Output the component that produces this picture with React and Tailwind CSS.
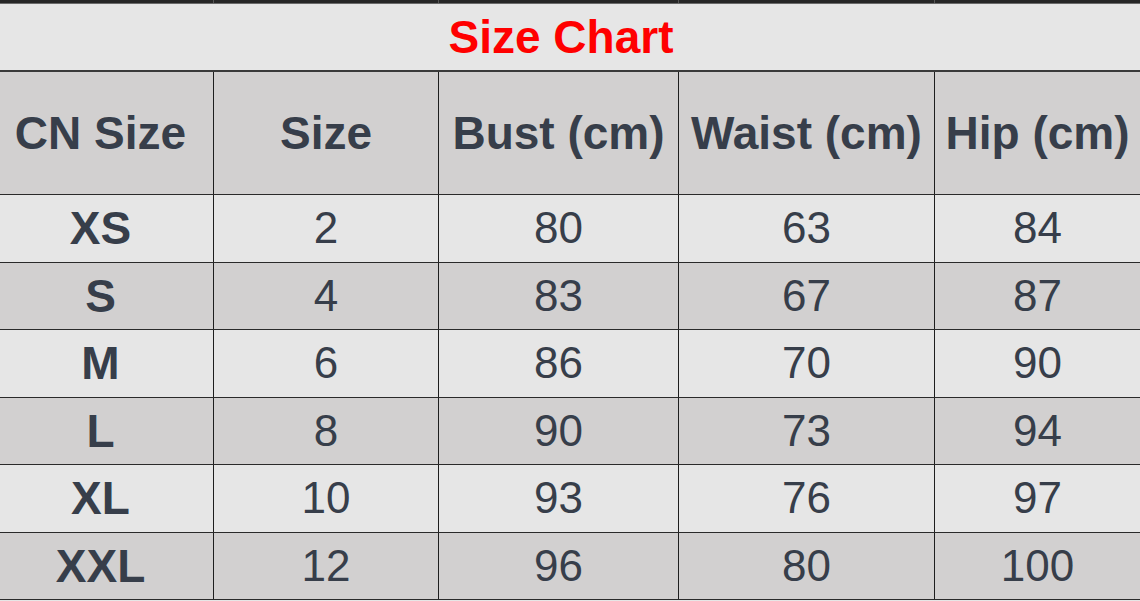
import React from "react";

const cols = ["w-[214px]", "w-[225px]", "w-[240px]", "w-[256px]", "flex-1"];
const headers = ["CN Size", "Size", "Bust (cm)", "Waist (cm)", "Hip (cm)"];
const rows = [
  ["XS", "2", "80", "63", "84"],
  ["S", "4", "83", "67", "87"],
  ["M", "6", "86", "70", "90"],
  ["L", "8", "90", "73", "94"],
  ["XL", "10", "93", "76", "97"],
  ["XXL", "12", "96", "80", "100"],
];

function Cell({ i, children, className = "" }) {
  return (
    <div
      className={`${cols[i]} ${
        i < 4 ? "border-r border-[#1e1e1e]" : ""
      } ${i === 0 ? "pr-[12px]" : ""} flex items-center justify-center ${className}`}
    >
      {children}
    </div>
  );
}

export default function App() {
  return (
    <div
      className="w-[1140px] h-[601px] bg-[#e6e6e6] flex flex-col overflow-hidden text-[#373e4a]"
      style={{ fontFamily: '"Liberation Sans", Arial, sans-serif' }}
    >
      <div className="h-[4px] flex bg-[#262626] border-b border-[#6a6a6a]">
        {cols.map((c, i) => (
          <div key={i} className={`${c} ${i < 4 ? "border-r border-[#555]" : ""}`} />
        ))}
      </div>
      <div className="h-[68px] flex items-center justify-center pr-[18px] border-b-2 border-[#3a3a3a] bg-[#e6e6e6]">
        <span className="text-[46px] font-bold text-[#ff0000] leading-none">Size Chart</span>
      </div>
      <div className="h-[123px] flex bg-[#d2d0d0] border-b border-[#2a2a2a]">
        {headers.map((h, i) => (
          <Cell key={h} i={i} className="text-[46px] font-bold leading-none">
            {h}
          </Cell>
        ))}
      </div>
      {rows.map((r, ri) => (
        <div
          key={ri}
          className={`h-[67.5px] flex border-b border-[#2a2a2a] ${
            ri % 2 === 0 ? "bg-[#e6e6e6]" : "bg-[#d2d0d0]"
          }`}
        >
          {r.map((v, i) => (
            <Cell
              key={i}
              i={i}
              className={`${i === 0 ? "font-bold text-[46px]" : "text-[44px]"} leading-none`}
            >
              {v}
            </Cell>
          ))}
        </div>
      ))}
    </div>
  );
}
